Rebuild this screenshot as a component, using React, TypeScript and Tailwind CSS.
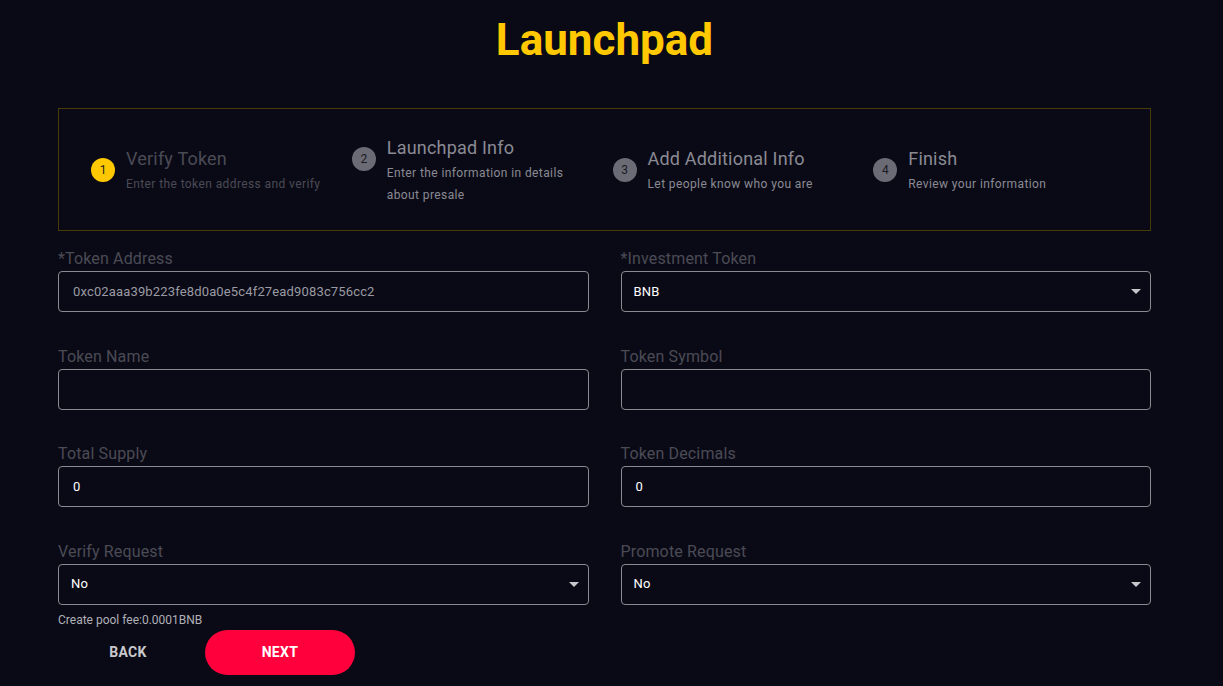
import React from "react";

const steps = [
  { n: "1", title: "Verify Token", sub: ["Enter the token address and verify"], active: true },
  { n: "2", title: "Launchpad Info", sub: ["Enter the information in details", "about presale"] },
  { n: "3", title: "Add Additional Info", sub: ["Let people know who you are"] },
  { n: "4", title: "Finish", sub: ["Review your information"] },
];

function Caret() {
  return (
    <svg width="10" height="5" viewBox="0 0 10 5" className="fill-[#c8c8cc]">
      <path d="M0 0 L10 0 L5 5 Z" />
    </svg>
  );
}

function Field({
  label,
  value,
  select,
  valueClass = "text-white",
}: {
  label: string;
  value?: string;
  select?: boolean;
  valueClass?: string;
}) {
  return (
    <div className="flex flex-col">
      <div className="h-[25px] text-[16px] leading-[26px] text-[#4b4b55] tracking-[0.15px]">{label}</div>
      <div
        className={`h-[41px] rounded-[4px] border border-[#8a8a90] flex items-center pr-[9px] ${
          select ? "pl-[12px]" : "pl-[14px]"
        }`}
      >
        <span className={`flex-1 text-[13px] tracking-[0.15px] ${valueClass}`}>{value}</span>
        {select && <Caret />}
      </div>
    </div>
  );
}

export default function App() {
  return (
    <div
      className="min-h-[686px] w-full bg-[#0a0a16] text-white"
      style={{ fontFamily: "Roboto, 'Liberation Sans', sans-serif" }}
    >
      <div className="mx-[58px] w-[1093px]">
        <div className="flex justify-center pt-[14px]">
          <h1 className="text-[44px] leading-[52px] font-bold text-[#ffc800]">Launchpad</h1>
        </div>
        <div className="mt-[42px] h-[123px] border border-[#4a3a06] grid grid-cols-4 px-[24px] items-center">
          {steps.map((s) => (
            <div key={s.n} className="flex items-start pl-[8px] pt-[3px]">
              <div
                className={`mt-[11px] w-[24px] h-[24px] rounded-full flex items-center justify-center text-[12px] shrink-0 ${
                  s.active ? "bg-[#ffc800] text-[#222]" : "bg-[#6b6b76] text-[#1a1a22]"
                }`}
              >
                {s.n}
              </div>
              <div className="ml-[11px] flex flex-col">
                <div
                  className={`text-[18px] leading-[24px] tracking-[0.2px] ${
                    s.active ? "text-[#4a4a55]" : "text-[#8a8a94]"
                  }`}
                >
                  {s.title}
                </div>
                {s.sub.map((l, i) => (
                  <div
                    key={l}
                    className={`text-[12px] leading-[22px] tracking-[0.4px] ${i === 0 ? "mt-[2px]" : ""} ${
                      s.active ? "text-[#4a4a55]" : "text-[#8a8a94]"
                    }`}
                  >
                    {l}
                  </div>
                ))}
              </div>
            </div>
          ))}
        </div>

        <div className="grid grid-cols-2 gap-x-[32px] gap-y-[31.5px] mt-[15px]">
          <Field
            label="*Token Address"
            value="0xc02aaa39b223fe8d0a0e5c4f27ead9083c756cc2"
            valueClass="text-[#9a9aa2]"
          />
          <Field label="*Investment Token" value="BNB" select />
          <Field label="Token Name" />
          <Field label="Token Symbol" />
          <Field label="Total Supply" value="0" />
          <Field label="Token Decimals" value="0" />
          <div className="flex flex-col">
            <Field label="Verify Request" value="No" select />
            <div className="text-[12px] leading-[14px] mt-[8px] text-[#b0b0b6]">Create pool fee:0.0001BNB</div>
          </div>
          <div>
            <Field label="Promote Request" value="No" select />
          </div>
        </div>

        <div className="flex items-center mt-[3px]">
          <button className="w-[140px] h-[45px] text-[14px] font-bold text-[#c8c8cc] tracking-wide">BACK</button>
          <button className="ml-[7px] w-[150px] h-[45px] rounded-full bg-[#ff003c] text-[14px] font-bold text-white tracking-wide">
            NEXT
          </button>
        </div>
      </div>
    </div>
  );
}
